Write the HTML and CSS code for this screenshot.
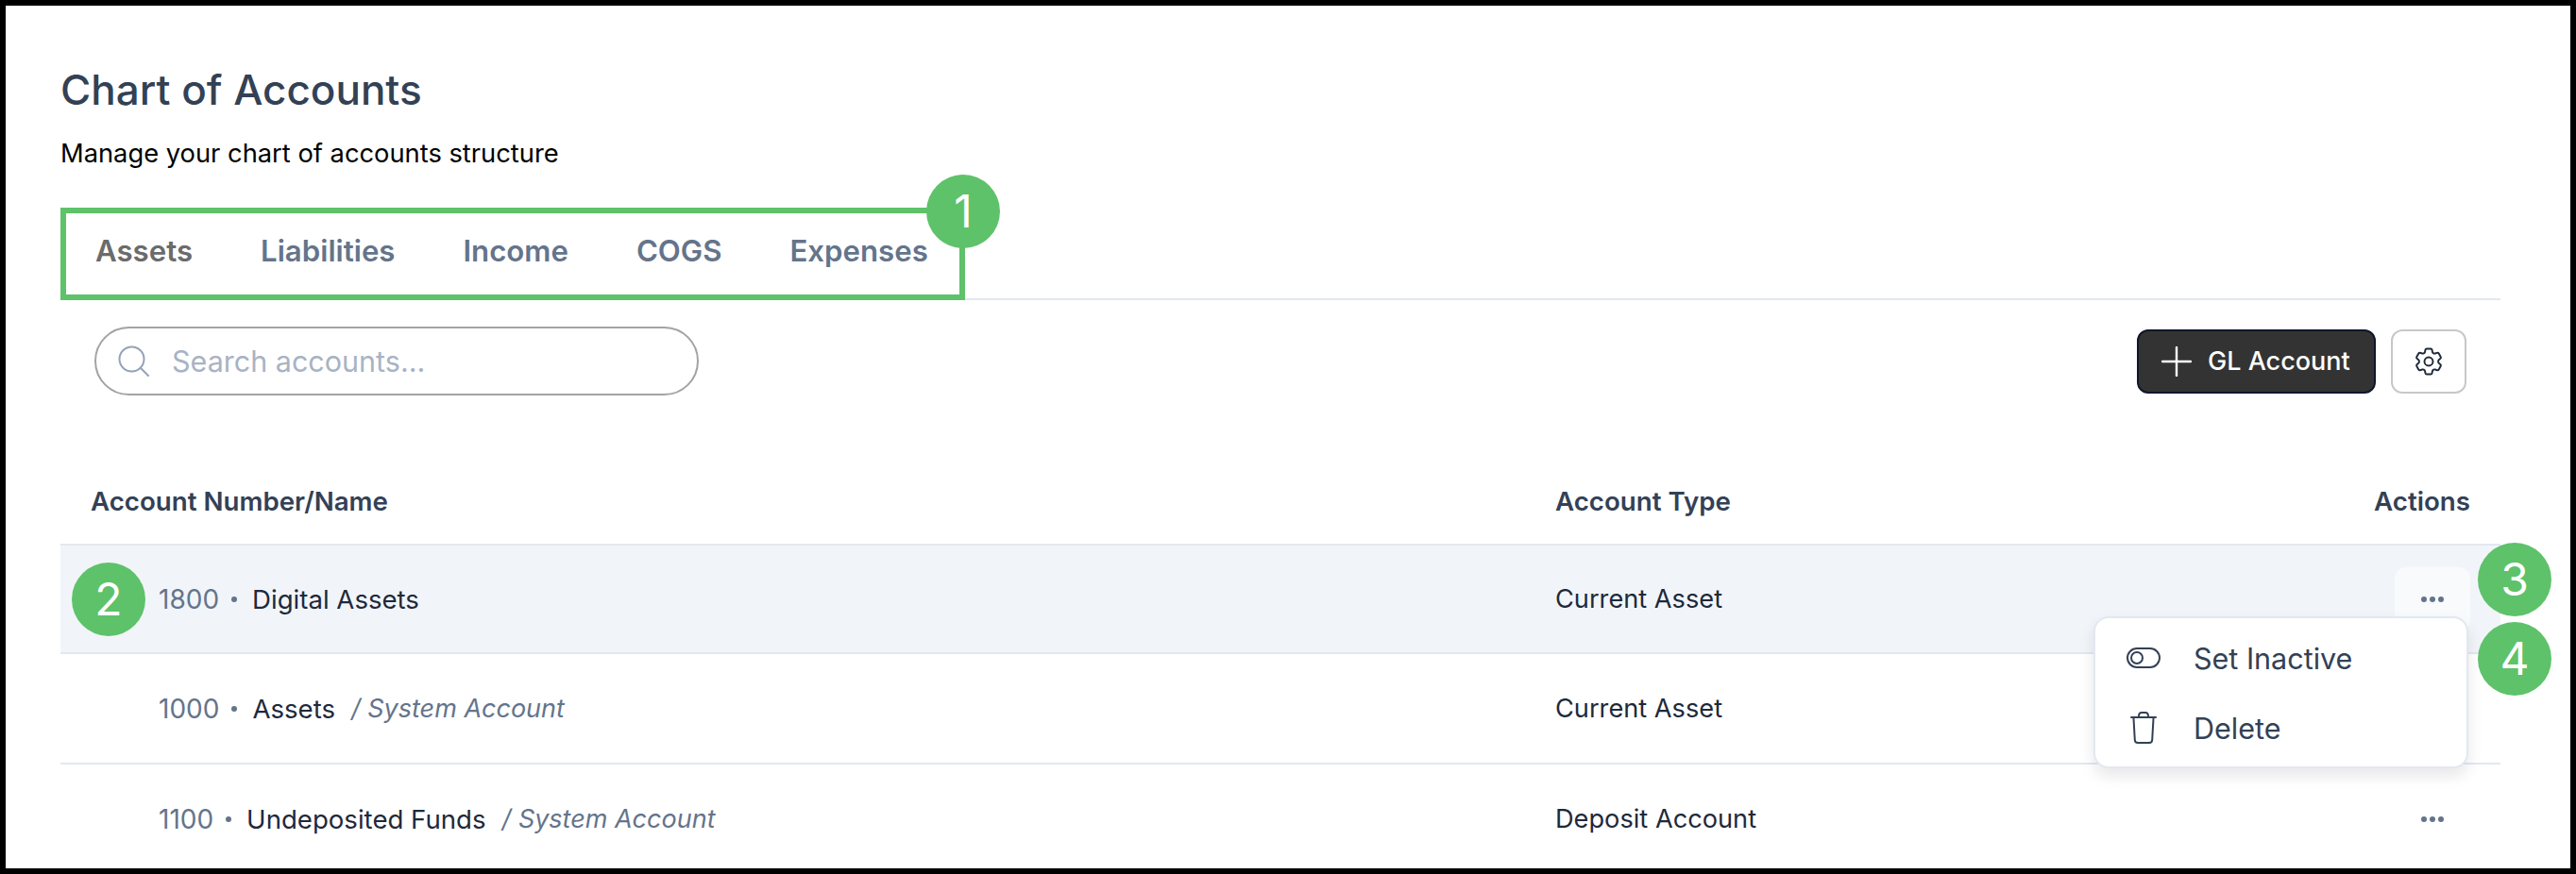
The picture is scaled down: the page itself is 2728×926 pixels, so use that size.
FILE: index.html
```html
<!DOCTYPE html>
<html lang="en">
<head>
<meta charset="utf-8">
<title>Chart of Accounts</title>
<link rel="stylesheet" href="styles.css">
</head>
<body>
<main class="frame">
  <header class="page-head">
    <h1 class="title">Chart of Accounts</h1>
    <p class="subtitle">Manage your chart of accounts structure</p>
  </header>

  <div class="tabbar">
    <nav class="tabs">
      <span class="tab tab-active">Assets</span>
      <span class="tab">Liabilities</span>
      <span class="tab">Income</span>
      <span class="tab">COGS</span>
      <span class="tab">Expenses</span>
      <span class="badge badge-1">1</span>
    </nav>
  </div>

  <div class="toolbar">
    <div class="search">
      <svg class="search-icon" viewBox="0 0 33 33" fill="none" stroke="currentColor" stroke-width="2" stroke-linecap="round"><circle cx="14.5" cy="14.5" r="13"/><path d="M24 24l8 8"/></svg>
      <span class="search-text">Search accounts...</span>
    </div>
    <div class="toolbar-actions">
      <button class="btn-primary" type="button">
        <svg class="plus-icon" viewBox="0 0 32 32" fill="none" stroke="currentColor" stroke-width="2.4" stroke-linecap="round"><path d="M16 1v30M1 16h30"/></svg>
        GL Account
      </button>
      <button class="btn-icon" type="button">
        <svg class="gear-icon" viewBox="0 0 24 24" fill="none" stroke="currentColor" stroke-width="1.3" stroke-linecap="round" stroke-linejoin="round"><path d="M9.594 3.94c.09-.542.56-.94 1.11-.94h2.593c.55 0 1.02.398 1.11.94l.213 1.281c.063.374.313.686.645.87.074.04.147.083.22.127.325.196.72.257 1.075.124l1.217-.456a1.125 1.125 0 0 1 1.37.49l1.296 2.247a1.125 1.125 0 0 1-.26 1.431l-1.003.827c-.293.241-.438.613-.43.992a7.723 7.723 0 0 1 0 .255c-.008.378.137.75.43.991l1.004.827c.424.35.534.955.26 1.43l-1.298 2.247a1.125 1.125 0 0 1-1.369.491l-1.217-.456c-.355-.133-.75-.072-1.076.124a6.47 6.47 0 0 1-.22.128c-.331.183-.581.495-.644.869l-.213 1.281c-.09.543-.56.94-1.11.94h-2.594c-.55 0-1.019-.398-1.11-.94l-.213-1.281c-.062-.374-.312-.686-.644-.87a6.52 6.52 0 0 1-.22-.127c-.325-.196-.72-.257-1.076-.124l-1.217.456a1.125 1.125 0 0 1-1.369-.49l-1.297-2.247a1.125 1.125 0 0 1 .26-1.431l1.004-.827c.292-.24.437-.613.43-.991a6.932 6.932 0 0 1 0-.255c.007-.38-.138-.751-.43-.992l-1.004-.827a1.125 1.125 0 0 1-.26-1.43l1.297-2.247a1.125 1.125 0 0 1 1.37-.491l1.216.456c.356.133.751.072 1.076-.124.072-.044.146-.086.22-.128.332-.183.582-.495.644-.869l.214-1.28Z"/><path d="M15 12a3 3 0 1 1-6 0 3 3 0 0 1 6 0Z"/></svg>
      </button>
    </div>
  </div>

  <section class="table">
    <div class="thead">
      <span>Account Number/Name</span>
      <span>Account Type</span>
      <span class="th-actions">Actions</span>
    </div>

    <div class="row row-selected">
      <div class="acct"><span class="num">1800</span><i class="sep"></i><span class="name">Digital Assets</span></div>
      <span class="type">Current Asset</span>
      <span class="more more-hover"><svg class="dots" viewBox="0 0 24 6" fill="currentColor"><circle cx="3" cy="3" r="3"/><circle cx="12" cy="3" r="3"/><circle cx="21" cy="3" r="3"/></svg></span>
      <span class="badge badge-2">2</span>
      <span class="badge badge-3">3</span>
      <span class="badge badge-4">4</span>
      <div class="menu">
        <div class="menu-item">
          <svg class="toggle-icon" viewBox="0 0 36 22" fill="none" stroke="currentColor" stroke-width="2"><rect x="1" y="1" width="34" height="20" rx="10"/><circle cx="11" cy="11" r="6"/></svg>
          <span>Set Inactive</span>
        </div>
        <div class="menu-item">
          <svg class="trash-icon" viewBox="0 0 28 34" fill="none" stroke="currentColor" stroke-width="2" stroke-linecap="round" stroke-linejoin="round"><path d="M1 6h26M9 5c0-2.500 1-4 3-4h4c2 0 3 1.500 3 4M3.500 7l1.300 23c.1 2 1.200 3 3.200 3h12c2 0 3.100-1 3.200-3l1.300-23"/></svg>
          <span>Delete</span>
        </div>
      </div>
    </div>

    <div class="row">
      <div class="acct"><span class="num">1000</span><i class="sep"></i><span class="name">Assets</span><em class="sys">/ System Account</em></div>
      <span class="type">Current Asset</span>
      <span class="more"></span>
    </div>

    <div class="row">
      <div class="acct"><span class="num">1100</span><i class="sep"></i><span class="name">Undeposited Funds</span><em class="sys">/ System Account</em></div>
      <span class="type">Deposit Account</span>
      <span class="more"><svg class="dots" viewBox="0 0 24 6" fill="currentColor"><circle cx="3" cy="3" r="3"/><circle cx="12" cy="3" r="3"/><circle cx="21" cy="3" r="3"/></svg></span>
    </div>
  </section>
</main>
</body>
</html>
```
FILE: styles.css
```css
* { box-sizing: border-box; }

html, body { margin: 0; height: 100%; }

body {
  background: #000;
  font-family: Inter, "Liberation Sans", sans-serif;
  padding: 6px;
}

.frame {
  position: relative;
  height: 914px;
  background: #fff;
  padding: 63px 74px 0 58px;
  overflow: hidden;
}

.title {
  margin: 0;
  font-size: 44px;
  line-height: 52px;
  font-weight: 500;
  color: #334155;
}

.subtitle {
  margin: 25px 0 0;
  font-size: 27.3px;
  line-height: 34px;
  color: #000;
}

.tabbar {
  margin-top: 40px;
  border-bottom: 2px solid #e2e8f0;
}

.tabs {
  position: relative;
  display: inline-flex;
  width: 958px;
  height: 98px;
  margin-bottom: -2px;
  vertical-align: top;
  padding: 20px 0 0 31px;
  gap: 72px;
  border: 6px solid #5ec26a;
}

.tab {
  font-size: 31.2px;
  line-height: 40px;
  font-weight: 600;
  color: #64748b;
}

.tab-active { color: #6b6b6b; }

.badge {
  position: absolute;
  width: 78px;
  height: 78px;
  border-radius: 50%;
  background: #5ec26a;
  color: #fff;
  font-size: 48px;
  line-height: 78px;
  text-align: center;
  z-index: 3;
}

.badge-1 { top: -41px; right: -43px; }
.badge-2 { top: 18px; left: 12px; }
.badge-3 { top: -3px; right: -54px; }
.badge-4 { top: 81px; right: -54px; }

.toolbar {
  display: flex;
  align-items: center;
  justify-content: space-between;
  padding: 28px 36px 0;
}

.search {
  display: flex;
  align-items: center;
  width: 640px;
  height: 73px;
  padding-left: 23px;
  gap: 24px;
  border: 2px solid #a3a3a3;
  border-radius: 37px;
}

.search-icon { width: 33px; height: 33px; color: #94a3b8; }

.search-text { font-size: 30.5px; color: #a8b3c4; }

.toolbar-actions { display: flex; gap: 16px; }

.btn-primary {
  display: flex;
  align-items: center;
  gap: 17px;
  width: 253px;
  height: 68px;
  padding: 0 0 0 24px;
  background: #333;
  border: 2px solid #0f172a;
  border-radius: 12px;
  color: #fff;
  font: 500 27px Inter, "Liberation Sans", sans-serif;
}

.plus-icon { width: 32px; height: 32px; }

.btn-icon {
  display: flex;
  align-items: center;
  justify-content: center;
  width: 80px;
  height: 68px;
  padding: 0;
  background: #fff;
  border: 2px solid #c8c8c8;
  border-radius: 12px;
  color: #1e293b;
}

.gear-icon { width: 36px; height: 36px; }

.thead, .row {
  display: grid;
  align-items: center;
  padding-right: 32px;
}

.thead {
  grid-template-columns: 1551px 1fr 80px;
  height: 95px;
  margin-top: 64px;
  padding: 3px 32px 0;
  border-bottom: 2px solid #e2e8f0;
  font-size: 27.7px;
  font-weight: 600;
  color: #334155;
}

.th-actions { justify-self: end; white-space: nowrap; }

.row {
  position: relative;
  height: 117px;
  padding-left: 104px;
  grid-template-columns: 1479px 1fr 80px;
  border-bottom: 2px solid #e2e8f0;
  font-size: 27.2px;
  color: #1e293b;
}

.row-selected { background: #f1f5f9; height: 115px; }

.acct { display: flex; align-items: center; }

.num { color: #64748b; font-size: 28px; }

.name { font-size: 27.6px; }

.sep {
  width: 6px;
  height: 6px;
  margin: 0 16px 0 13px;
  border-radius: 50%;
  background: #64748b;
}

.sys {
  margin-left: 17px;
  color: #64748b;
  font-style: italic;
  font-size: 27px;
}

.type { color: #1e293b; }

.more {
  display: flex;
  align-items: center;
  justify-content: center;
  width: 80px;
  height: 68px;
  border-radius: 12px;
  color: #64748b;
}

.more-hover { background: #f8fafc; }

.dots { width: 24px; height: 6px; }

.menu {
  position: absolute;
  top: 75px;
  right: 34px;
  width: 397px;
  height: 161px;
  padding: 5px 0;
  background: #fff;
  border: 2px solid #e2e8f0;
  border-radius: 16px;
  box-shadow: 0 8px 16px rgba(15, 23, 42, 0.1);
  z-index: 2;
}

.menu-item {
  display: grid;
  grid-template-columns: 36px 1fr;
  align-items: center;
  column-gap: 35px;
  height: 74px;
  padding-left: 33px;
  font-size: 30.5px;
  color: #334155;
}

.toggle-icon { width: 36px; height: 22px; }

.trash-icon { width: 28px; height: 34px; justify-self: center; }
```
